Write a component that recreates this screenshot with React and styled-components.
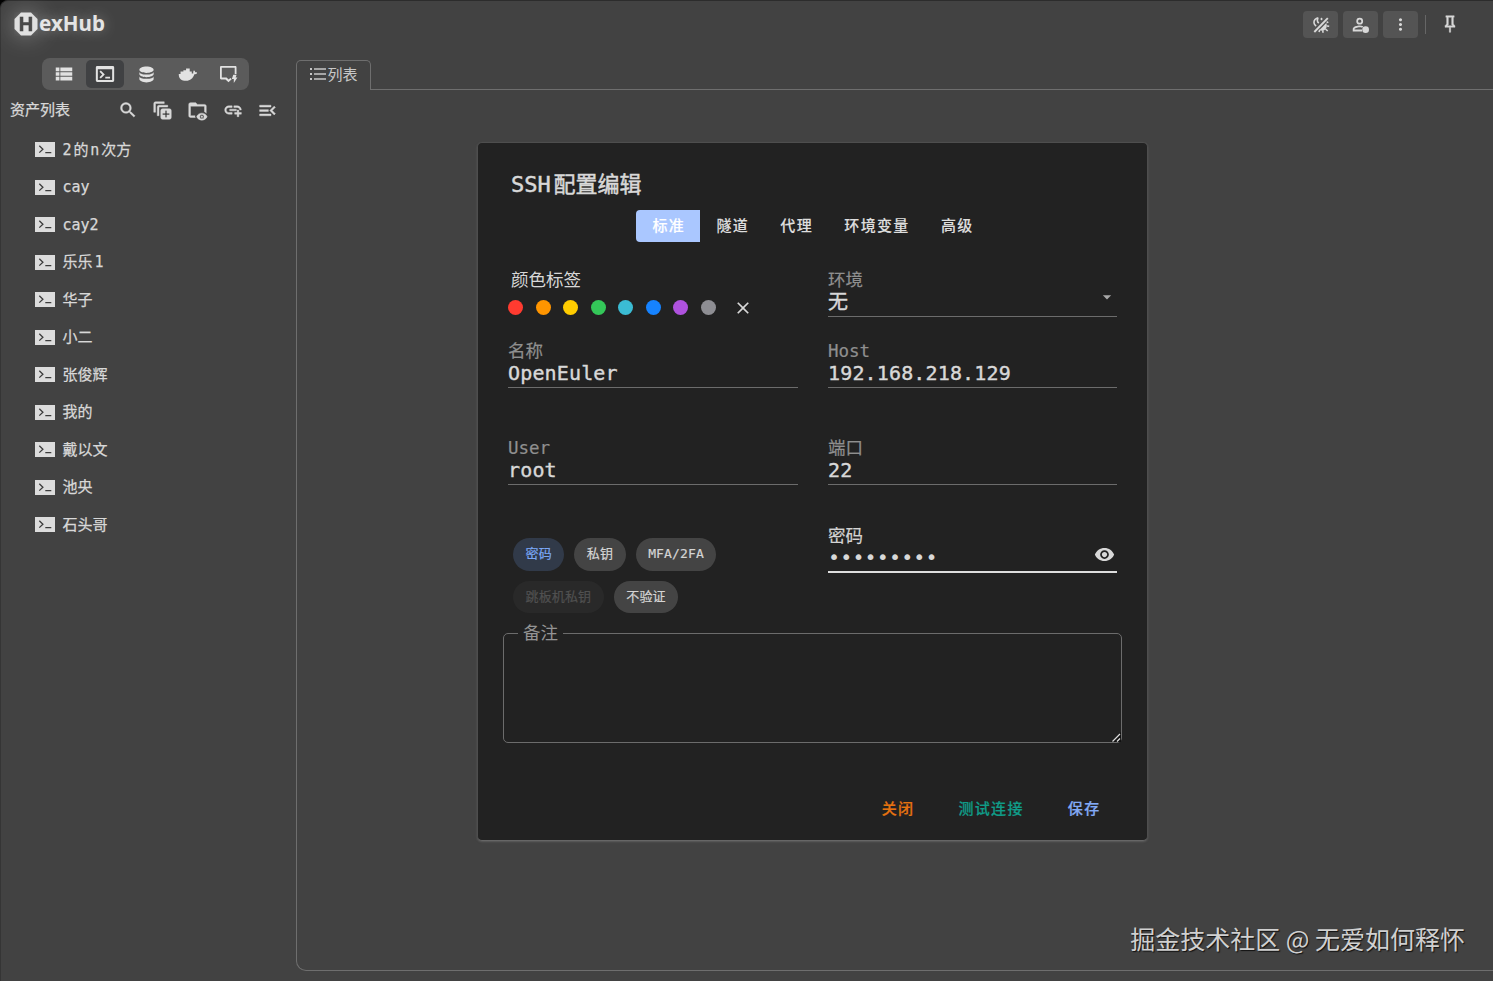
import React from "react";
import styled, { createGlobalStyle } from "styled-components";
import {
  MdViewList,
  MdSearch,
  MdAddLink,
  MdMenuOpen,
  MdMoreVert,
  MdVisibility,
  MdArrowDropDown,
  MdClose,
} from "react-icons/md";

const hosts = [
  "2的n次方",
  "cay",
  "cay2",
  "乐乐1",
  "华子",
  "小二",
  "张俊辉",
  "我的",
  "戴以文",
  "池央",
  "石头哥",
];

const tabs = ["标准", "隧道", "代理", "环境变量", "高级"];

const colors = [
  "#ff3b30",
  "#ff9500",
  "#ffcc00",
  "#34c759",
  "#3bbcd4",
  "#1683ff",
  "#af52de",
  "#8e8e93",
];

//Icons
const Svg = ({ size = 20, children }) => (
  <svg width={size} height={size} viewBox="0 0 24 24" fill="currentColor">
    {children}
  </svg>
);

const TerminalIcon = () => (
  <Svg size={22}>
    <path d="M20.500 3.300h-17A1.500 1.500 0 0 0 2 4.800v14.400a1.500 1.500 0 0 0 1.500 1.500h17a1.500 1.500 0 0 0 1.500-1.500V4.800a1.500 1.500 0 0 0-1.500-1.500m-.7 15.200H4.200V6.700h15.600zM7.400 17 6 15.600l3-3-3-3 1.400-1.400 4.400 4.400zM17.500 17h-5.200v-2h5.200z" />
  </Svg>
);

const DatabaseIcon = () => (
  <Svg size={19}>
    <path d="M12 2C7 2 3 3.8 3 6s4 4 9 4 9-1.800 9-4-4-4-9-4M3 8.400v3c0 2.200 4 4 9 4s9-1.800 9-4v-3c0 2.200-4 3.600-9 3.600s-9-1.400-9-3.600m0 5.900v3.500c0 2.300 4 4.200 9 4.200s9-1.900 9-4.200v-3.500c0 2.200-4 3.200-9 3.200s-9-1-9-3.200" />
  </Svg>
);

const DockerIcon = () => (
  <Svg size={19}>
    <path d="M1 11.500h2.200V8.300h3.600V6.500h3.400V4.300h4.600v4h2.600v2.500c.9.100 1.500-.1 2-.4-.5-1.400-.1-2.700.8-3.700 1 .7 1.500 1.600 1.600 2.600 1-.2 1.900 0 2.500.5-.6 1.400-1.900 2-3.600 2-1.800 5.400-5.300 8.200-10.300 8.200C4 20 .8 17 1 11.500" />
  </Svg>
);

const RemoteIcon = () => (
  <svg width="19" height="19" viewBox="0 0 19 19" fill="currentColor">
    <path d="M2.200 1h14.100c.7 0 1.200.5 1.200 1.200V9h-1.800V2.800H2.800v9.800h4.800l2 2 1.800-1.700 1.300 1.300-3.200 3.100-3-2.900H2.200c-.7 0-1.200-.5-1.200-1.200V2.200C1 1.500 1.500 1 2.200 1" />
    <path d="M14.300 9.800h3.300l-1 2.700h1.800l-3.600 5.600v-4.200h-2z" />
  </svg>
);

const ExpandAllIcon = () => (
  <Svg size={21}>
    <path d="M18,8H8V18H6V8A2,2 0 0,1 8,6H18V8M14,2H4A2,2 0 0,0 2,4V14H4V4H14V2M22,12V20A2,2 0 0,1 20,22H12A2,2 0 0,1 10,20V12A2,2 0 0,1 12,10H20A2,2 0 0,1 22,12M20,15H17V12H15V15H12V17H15V20H17V17H20V15Z" />
  </Svg>
);

const FolderEyeIcon = () => (
  <Svg size={21}>
    <path d="M17 18a1 1 0 1 1 0 2 1 1 0 0 1 0-2m0-3c-2.730 0-5.060 1.660-6 4 .94 2.340 3.270 4 6 4s5.060-1.660 6-4c-.94-2.340-3.270-4-6-4m0 6.500a2.500 2.500 0 1 1 0-5 2.500 2.500 0 0 1 0 5M9.270 18H4V7h16v6.550c.75.42 1.430.95 2 1.580V7c0-1.110-.9-2-2-2h-8l-2-2H4c-1.100 0-2 .89-2 2v13c0 1.100.9 2 2 2h5.500l-.5-1z" />
  </Svg>
);

const PinIcon = () => (
  <Svg size={20}>
    <path d="M16,12V4H17V2H7V4H8V12L6,14V16H11.2V22H12.8V16H18V14L16,12M8.8,14L10,12.8V4H14V12.8L15.2,14H8.8Z" stroke="currentColor" strokeWidth="0.5" />
  </Svg>
);

const ThemeIcon = () => (
  <svg width="18" height="18" viewBox="0 0 18 18" fill="none" stroke="currentColor">
    <path d="M2.300 16 15.800 2.200" strokeWidth="1.900" />
    <path d="M6.300 1.700C3.500 2 1.700 4.300 2 6.800c.2 1.400 1 2.500 2.200 3.200M6.300 1.900C4.900 3.600 5 5.800 6.800 7.200" strokeWidth="1.600" />
    <path d="M9.500 1.800v2.400M8.300 3h2.400" strokeWidth="1" />
    <path d="M14.300 7 7.500 14c2.200 1.500 5 .8 6.300-1.200 1.100-1.800 1.300-3.800.5-5.800z" fill="currentColor" stroke="none" />
    <path d="m14.600 6.600 1.700-.7M15 10l2.200.3M13.500 13l2.200 2M10.800 14.200l.2 2.600M7.800 13.700l-.8 2.200" strokeWidth="1.600" />
  </svg>
);

const UserIcon = () => (
  <Svg size={19}>
    <path d="M11 3.500a4.300 4.300 0 1 0 0 8.600 4.300 4.300 0 0 0 0-8.600m0 2.200a2.100 2.100 0 1 1 0 4.200 2.100 2.100 0 0 1 0-4.200m0 7.600c-3 0-8.800 1.300-8.800 4.500v2.900H14v-2.300H4.500V18c0-1 3.400-2.400 6.500-2.400 1 0 2 .1 3 .4l1.500-1.700c-1.500-.6-3.200-1-4.500-1" />
    <circle cx="18.500" cy="18.500" r="4.200" />
  </Svg>
);

const ListIcon = () => (
  <svg width="16" height="14" viewBox="0 0 16 14" fill="currentColor">
    <path d="M0 1h2v2H0zM0 6h2v2H0zM0 11h2v2H0zM4 1.200h12v1.500H4zM4 6.200h12v1.500H4zM4 11.200h12v1.500H4z" />
  </svg>
);

const HostIcon = () => (
  <svg width="20" height="15" viewBox="0 0 20 15">
    <rect width="20" height="15" fill="#dcdcdc" />
    <path d="m4.300 3.800 3.600 3.400-3.600 3.400M10.300 10.700h6" fill="none" stroke="#3c3c3c" strokeWidth="1.300" />
  </svg>
);

const LogoIcon = () => (
  <svg width="24" height="24" viewBox="0 0 24 24">
    <path d="M7 .5h10L23.500 7v10L17 23.500H7L.5 17V7z" fill="#dedede" />
    <text x="12" y="19.200" textAnchor="middle" fontFamily="Liberation Sans" fontSize="20" fontWeight="700" fill="#444" stroke="#444" strokeWidth="0.6">
      H
    </text>
  </svg>
);

const Input = ({ label, value, children, focused }) => (
  <Field $focused={focused}>
    <Label $focused={focused}>{label}</Label>
    <Value $focused={focused}>
      <span>{value}</span>
      {children}
    </Value>
  </Field>
);

const App = () => {
  return (
    <>
      <GlobalStyle />
      <Window>
        <Header>
          <Logo>
            <LogoIcon />
            <span>exHub</span>
          </Logo>
          <HeaderActions>
            <HeaderButton><ThemeIcon /></HeaderButton>
            <HeaderButton><UserIcon /></HeaderButton>
            <HeaderButton><MdMoreVert size={19} /></HeaderButton>
            <Divider />
            <PinButton><PinIcon /></PinButton>
          </HeaderActions>
        </Header>
        <Body>
          <Sidebar>
            <Switcher>
              <SwitchButton><MdViewList size={22} /></SwitchButton>
              <SwitchButton $active><TerminalIcon /></SwitchButton>
              <SwitchButton><DatabaseIcon /></SwitchButton>
              <SwitchButton><DockerIcon /></SwitchButton>
              <SwitchButton><RemoteIcon /></SwitchButton>
            </Switcher>
            <ListHeader>
              <ListTitle>资产列表</ListTitle>
              <ListTools>
                <ToolButton><MdSearch size={20} /></ToolButton>
                <ToolButton><ExpandAllIcon /></ToolButton>
                <ToolButton><FolderEyeIcon /></ToolButton>
                <ToolButton><MdAddLink size={20} /></ToolButton>
                <ToolButton><MdMenuOpen size={21} /></ToolButton>
              </ListTools>
            </ListHeader>
            <HostList>
              {hosts.map((host) => (
                <Host key={host}>
                  <HostIcon />
                  <span>{host}</span>
                </Host>
              ))}
            </HostList>
          </Sidebar>
          <Main>
            <TabBar>
              <PageTab>
                <ListIcon />
                列表
              </PageTab>
              <TabLine />
            </TabBar>
            <Panel>
              <Dialog>
                <Title>SSH配置编辑</Title>
                <Tabs>
                  {tabs.map((tab, i) => (
                    <Tab key={tab} $active={i === 0}>{tab}</Tab>
                  ))}
                </Tabs>
                <Form>
                  <div>
                    <ColorLabel>颜色标签</ColorLabel>
                    <Colors>
                      {colors.map((color) => (
                        <Dot key={color} $color={color} />
                      ))}
                      <MdClose size={20} />
                    </Colors>
                  </div>
                  <Input label="环境" value="无">
                    <Arrow><MdArrowDropDown size={20} /></Arrow>
                  </Input>
                  <Input label="名称" value="OpenEuler" />
                  <Input label="Host" value="192.168.218.129" />
                  <Input label="User" value="root" />
                  <Input label="端口" value="22" />
                  <Chips>
                    <Chip $active>密码</Chip>
                    <Chip>私钥</Chip>
                    <Chip>MFA/2FA</Chip>
                    <Chip $disabled>跳板机私钥</Chip>
                    <Chip>不验证</Chip>
                  </Chips>
                  <Input label="密码" value="•••••••••" focused>
                    <Eye><MdVisibility size={21} /></Eye>
                  </Input>
                </Form>
                <Remark>
                  <legend>备注</legend>
                  <RemarkBody>
                    <svg width="10" height="10" viewBox="0 0 10 10">
                      <path d="M0 10 10 0v10z" fill="#111" />
                      <path d="m1.500 9.500 7.500-7.500M6 9.500 9 6.500" stroke="#ddd" strokeWidth="1.300" />
                    </svg>
                  </RemarkBody>
                </Remark>
                <Actions>
                  <Action $color="#e57310">关闭</Action>
                  <Action $color="#109c88">测试连接</Action>
                  <Action $color="#82aaf5">保存</Action>
                </Actions>
              </Dialog>
              <Watermark>掘金技术社区 @ 无爱如何释怀</Watermark>
            </Panel>
          </Main>
        </Body>
      </Window>
    </>
  );
};

const GlobalStyle = createGlobalStyle`
  * {
    margin: 0;
    padding: 0;
    box-sizing: border-box;
  }
  body {
    background: #000;
    color: #d8d8d8;
    font-family: "DejaVu Sans Mono", "Noto Sans CJK SC", monospace;
    font-size: 15px;
    text-autospace: normal;
    -webkit-text-stroke: 0.25px;
    overflow: hidden;
  }
  svg {
    display: block;
    flex-shrink: 0;
  }
  button {
    border: none;
    background: none;
    color: inherit;
    font: inherit;
    white-space: nowrap;
  }
`;

const Window = styled.div`
  display: flex;
  flex-direction: column;
  height: 981px;
  background: #424242;
  border-top: 1px solid #2c2c2c;
  border-left: 1px solid #353535;
  border-radius: 8px 0 0 0;
`;

const Header = styled.header`
  display: flex;
  justify-content: space-between;
  height: 57px;
  padding: 10px 33px 0 13px;
`;

const Logo = styled.div`
  display: flex;
  align-items: center;
  gap: 1px;
  height: 26px;
  color: #e4e4e4;
  font: 700 20.6px/26px "Noto Sans", sans-serif;
  -webkit-text-stroke: 0;
  text-shadow: 0 0 14px rgba(255, 255, 255, 0.35);
  svg {
    filter: drop-shadow(0 0 12px rgba(255, 255, 255, 0.4));
  }
  span {
    padding-bottom: 2px;
  }
`;

const HeaderActions = styled.div`
  display: flex;
  gap: 5px;
  height: 27px;
`;

const HeaderButton = styled.button`
  display: flex;
  align-items: center;
  justify-content: center;
  width: 35px;
  background: #545454;
  border-radius: 4px;
`;

const Divider = styled.div`
  width: 1px;
  height: 19px;
  margin: 4px 0 0 2px;
  background: #666;
`;

const PinButton = styled.button`
  display: flex;
  align-items: center;
  justify-content: center;
  width: 28px;
  margin: -2px -4px 0 5px;
`;

const Body = styled.div`
  display: flex;
  flex: 1;
`;

const Sidebar = styled.aside`
  width: 295px;
`;

const Switcher = styled.div`
  display: flex;
  gap: 3px;
  width: 207px;
  height: 32px;
  margin-left: 41px;
  padding: 2px 1px 2px 3px;
  background: #5b5b5b;
  border-radius: 8px;
`;

const SwitchButton = styled.button`
  display: flex;
  align-items: center;
  justify-content: center;
  flex: 1;
  border-radius: 5px;
  background: ${(props) => (props.$active ? "#404143" : "none")};
  color: #e2e2e2;
`;

const ListHeader = styled.div`
  display: flex;
  align-items: center;
  justify-content: space-between;
  height: 41px;
  padding: 0 11px 1px 9px;
`;

const ListTitle = styled.span`
  padding-bottom: 4px;
`;

const ListTools = styled.div`
  display: flex;
  path:not([fill="none"]) {
    stroke: currentColor;
    stroke-width: 0.5;
  }
  path[fill="none"] {
    stroke: none;
  }
`;

const ToolButton = styled.button`
  display: flex;
  align-items: center;
  justify-content: center;
  width: 35px;
  height: 30px;
`;

const HostList = styled.ul`
  list-style: none;
`;

const Host = styled.li`
  display: flex;
  align-items: center;
  gap: 7.5px;
  height: 37.5px;
  padding-left: 34px;
  line-height: 20px;
`;

const Main = styled.main`
  display: flex;
  flex-direction: column;
  flex: 1;
  padding-bottom: 10px;
`;

const TabBar = styled.div`
  display: flex;
  align-items: flex-end;
  height: 32px;
`;

const PageTab = styled.div`
  display: flex;
  align-items: center;
  gap: 1.5px;
  width: 75px;
  height: 30px;
  padding: 0 0 4px 13px;
  border: 1px solid #6e6e6e;
  border-bottom: none;
  border-radius: 5px 5px 0 0;
  color: #c8c8c8;
  white-space: nowrap;
  -webkit-text-stroke: 0;
`;

const TabLine = styled.div`
  flex: 1;
  height: 1px;
  background: #6e6e6e;
`;

const Panel = styled.section`
  position: relative;
  flex: 1;
  padding: 52px 0 0 180px;
  border: solid #6e6e6e;
  border-width: 0 0 1px 1px;
  border-bottom-left-radius: 10px;
`;

const Dialog = styled.div`
  display: flex;
  flex-direction: column;
  width: 671px;
  height: 699px;
  padding: 1px 25px 0 26px;
  background: #222;
  border: 1px solid #4e4e4e;
  border-bottom-color: #666;
  border-radius: 5px;
  box-shadow: 0 1px 2px rgba(120, 120, 120, 0.5);
`;

const Title = styled.h2`
  padding: 25px 0 0 7px;
  font-size: 22px;
  font-weight: 400;
  line-height: 32px;
  -webkit-text-stroke: 0.5px;
`;

const Tabs = styled.div`
  display: flex;
  justify-content: center;
  margin: 9px 1px 0 0;
`;

const Tab = styled.button`
  height: 32px;
  padding: 0 15.1px 4px 16.2px;
  background: ${(props) => (props.$active ? "#aac7ff" : "none")};
  border-radius: 4px 0 0 4px;
  color: ${(props) => (props.$active ? "#fff" : "#dedede")};
  font-weight: 500;
  letter-spacing: 1.34px;
  -webkit-text-stroke: 0.15px;
`;

const Form = styled.div`
  display: grid;
  grid-template-columns: 290px 289px;
  grid-template-rows: 71px 97px 88px 98px;
  column-gap: 30px;
  align-items: start;
  margin-top: 27px;
  padding-left: 4px;
`;

const ColorLabel = styled.div`
  padding-left: 3px;
  font-size: 17.5px;
  line-height: 22px;
  -webkit-text-stroke: 0;
`;

const Colors = styled.div`
  display: flex;
  align-items: center;
  gap: 12.5px;
  height: 33px;
  svg {
    margin-left: 4.5px;
  }
`;

const Dot = styled.span`
  width: 15px;
  height: 15px;
  border-radius: 50%;
  background: ${(props) => props.$color};
`;

const Field = styled.div`
  height: 48px;
  border-bottom: ${(props) => (props.$focused ? "2px solid #dedede" : "1px solid #6c6c6c")};
`;

const Label = styled.div`
  color: ${(props) => (props.$focused ? "#d4d4d4" : "#8f8f8f")};
  font-size: 17.5px;
  line-height: 22px;
  -webkit-text-stroke: 0.2px;
`;

const Value = styled.div`
  display: flex;
  justify-content: space-between;
  font-size: 20px;
  line-height: ${(props) => (props.$focused ? "20px" : "22px")};
  letter-spacing: 0.15px;
  -webkit-text-stroke: ${(props) => (props.$focused ? "0" : "0.4px")};
`;

const Arrow = styled.span`
  color: #a8a8a8;
  margin-top: -4px;
`;

const Eye = styled.span`
  margin: -3px 2px 0 0;
`;

const Chips = styled.div`
  display: flex;
  flex-wrap: wrap;
  gap: 10px;
  padding: 13px 40px 0 5px;
`;

const Chip = styled.span`
  height: 32.5px;
  padding: 0 12.5px;
  border-radius: 17px;
  background: ${(props) => (props.$active ? "#313a49" : props.$disabled ? "#292929" : "#444")};
  color: ${(props) => (props.$active ? "#7aa7f5" : props.$disabled ? "#505050" : "#d4d4d4")};
  font-size: 13px;
  line-height: 31px;
  letter-spacing: 0.15px;
  -webkit-text-stroke: 0.2px;
`;

const Remark = styled.fieldset`
  width: 619px;
  height: 120px;
  margin-left: -1px;
  padding-left: 14px;
  border: 1px solid #6c6c6c;
  border-radius: 5px;
  legend {
    padding: 0 5px;
    color: #949494;
    font-size: 17.5px;
    line-height: 20px;
    -webkit-text-stroke: 0;
  }
`;

const RemarkBody = styled.div`
  display: flex;
  align-items: flex-end;
  justify-content: flex-end;
  height: 99px;
`;

const Actions = styled.div`
  display: flex;
  justify-content: flex-end;
  gap: 44px;
  padding: 54px 21.5px 0 0;
`;

const Action = styled.button`
  color: ${(props) => props.$color};
  font-weight: 500;
  line-height: 24px;
  letter-spacing: 1.34px;
  -webkit-text-stroke: 0.2px;
`;

const Watermark = styled.div`
  position: absolute;
  right: 28px;
  bottom: 14px;
  color: #d0d0d0;
  font: 25px/36px "Noto Sans CJK SC", sans-serif;
  text-shadow: 1px 1px 1px #111;
  text-autospace: no-autospace;
  -webkit-text-stroke: 0;
`;

export default App;
